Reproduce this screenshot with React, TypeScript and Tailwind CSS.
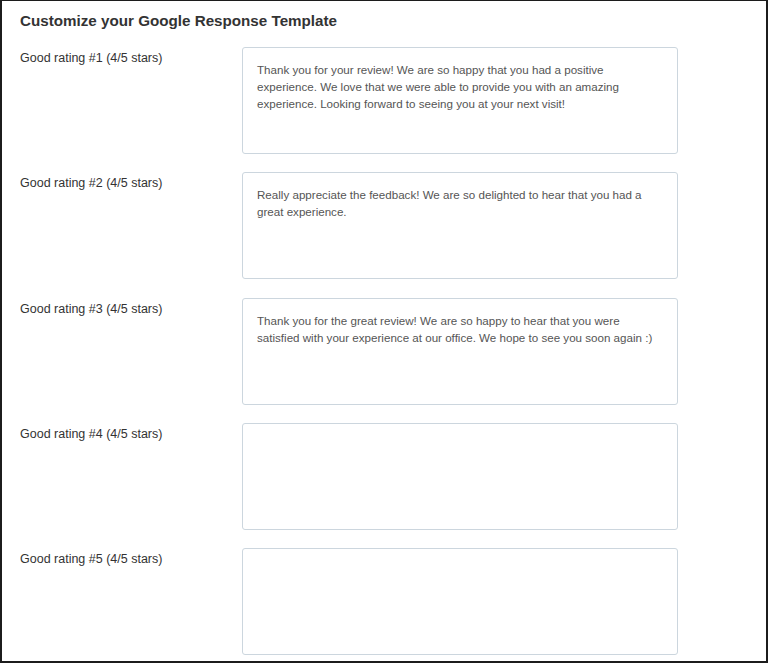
import React from "react";

const TEMPLATES = [
  {
    label: "Good rating #1 (4/5 stars)",
    text: "Thank you for your review! We are so happy that you had a positive experience. We love that we were able to provide you with an amazing experience. Looking forward to seeing you at your next visit!",
  },
  {
    label: "Good rating #2 (4/5 stars)",
    text: "Really appreciate the feedback! We are so delighted to hear that you had a great experience.",
  },
  {
    label: "Good rating #3 (4/5 stars)",
    text: "Thank you for the great review! We are so happy to hear that you were satisfied with your experience at our office. We hope to see you soon again :)",
  },
  { label: "Good rating #4 (4/5 stars)", text: "" },
  { label: "Good rating #5 (4/5 stars)", text: "" },
];

export default function App() {
  return (
    <div className="h-[663px] w-[768px] overflow-hidden border-2 border-t border-[#1c1c1c] bg-white font-['Liberation_Sans',Arial,sans-serif]">
      <h2 className="px-[18px] pt-[11px] text-[15.2px] font-bold leading-[18px] text-[#333]">
        Customize your Google Response Template
      </h2>

      <div className="mt-[17px] flex flex-col gap-[18.3px] pl-[18px]">
        {TEMPLATES.map((t) => (
          <div key={t.label} className="flex">
            <label className="w-[222px] shrink-0 pt-[3px] text-[12.5px] leading-[16px] text-[#333]">
              {t.label}
            </label>
            <textarea
              defaultValue={t.text}
              className="h-[107px] w-[436px] resize-none rounded-[3px] border border-[#ccd6de] px-[14px] pt-[13px] pb-[10px] text-[11.6px] leading-[17px] text-[#555] outline-none"
            />
          </div>
        ))}
      </div>
    </div>
  );
}
